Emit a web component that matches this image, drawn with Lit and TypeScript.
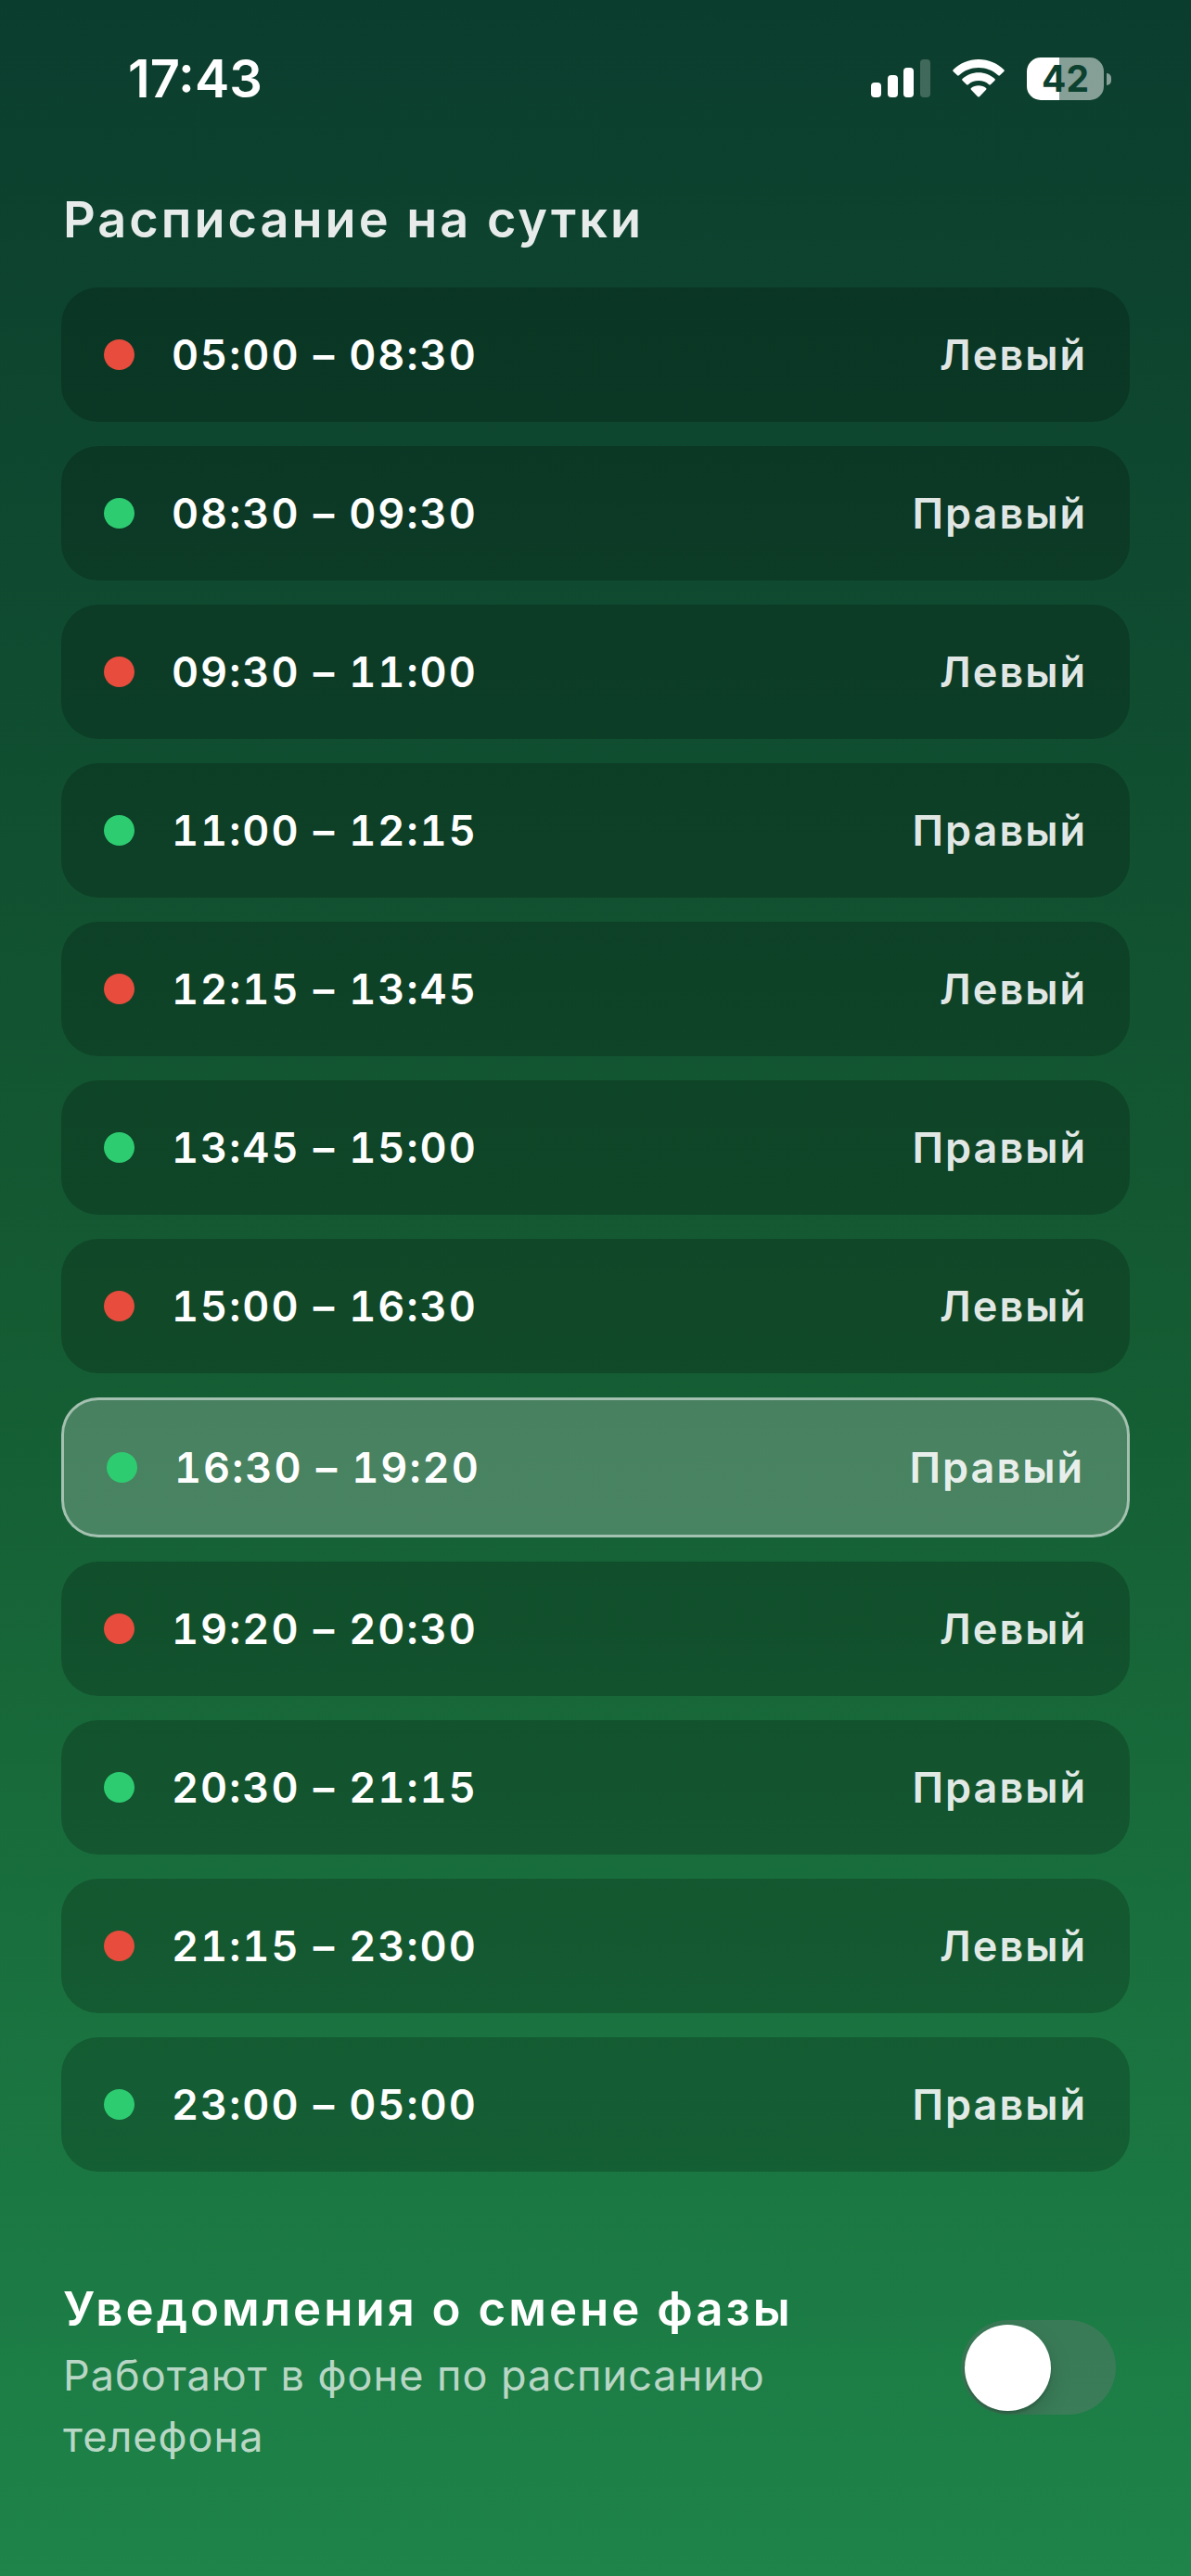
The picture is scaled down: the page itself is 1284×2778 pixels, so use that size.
import { LitElement, html, css, svg } from "lit";
import { customElement, property, state } from "lit/decorators.js";
import { classMap } from "lit/directives/class-map.js";

type Side = "left" | "right";

interface Slot {
  from: string;
  to: string;
  side: Side;
}

const SIDE_NAMES: Record<Side, string> = { left: "Левый", right: "Правый" };

const SLOTS: Slot[] = [
  { from: "05:00", to: "08:30", side: "left" },
  { from: "08:30", to: "09:30", side: "right" },
  { from: "09:30", to: "11:00", side: "left" },
  { from: "11:00", to: "12:15", side: "right" },
  { from: "12:15", to: "13:45", side: "left" },
  { from: "13:45", to: "15:00", side: "right" },
  { from: "15:00", to: "16:30", side: "left" },
  { from: "16:30", to: "19:20", side: "right" },
  { from: "19:20", to: "20:30", side: "left" },
  { from: "20:30", to: "21:15", side: "right" },
  { from: "21:15", to: "23:00", side: "left" },
  { from: "23:00", to: "05:00", side: "right" },
];

const SIGNAL_BARS = [
  { x: 0, h: 16, on: true },
  { x: 18, h: 24, on: true },
  { x: 35, h: 32, on: true },
  { x: 53, h: 41, on: false },
];

@customElement("status-bar")
export class StatusBar extends LitElement {
  @property() time = "";
  @property({ type: Number }) battery = 0;

  static styles = css`
    :host {
      display: flex;
      align-items: center;
      justify-content: space-between;
      padding: 53px 86px 53px 138px;
      color: #fff;
    }
    .time {
      font-size: 56px;
      line-height: 64px;
      font-weight: 600;
    }
    .icons {
      display: flex;
      align-items: center;
    }
    .signal {
      width: 64px;
      height: 42px;
      margin-right: 24px;
    }
    .wifi {
      width: 56px;
      height: 42px;
      margin-right: 24px;
    }
    .battery {
      display: flex;
      align-items: center;
      gap: 3px;
    }
    .cell {
      display: flex;
      align-items: center;
      justify-content: center;
      width: 83px;
      height: 46px;
      border-radius: 15px;
      font-size: 39px;
      line-height: 46px;
      font-weight: 700;
      color: #0c402f;
    }
    .nub {
      width: 5px;
      height: 13px;
      border-radius: 0 6px 6px 0;
      background: rgba(255, 255, 255, 0.5);
    }
  `;

  render() {
    const fill = `background: linear-gradient(to right, #fff ${this.battery}%, rgba(255, 255, 255, 0.5) ${this.battery}%)`;
    return html`
      <span class="time">${this.time}</span>
      <div class="icons">
        <svg class="signal" viewBox="0 0 64 42" aria-hidden="true">
          ${SIGNAL_BARS.map(
            (bar) => svg`<rect x=${bar.x} y=${41 - bar.h} width="11" height=${bar.h} rx="4"
              fill="#fff" fill-opacity=${bar.on ? 1 : 0.22} />`,
          )}
        </svg>
        <svg class="wifi" viewBox="0 0 56 42" aria-hidden="true" fill="#fff">
          <path d="M28 0C17.500 0 7.800 4.200 0.600 11.200Q-0.200 12 0.600 12.900L5.100 17.300Q5.900 18.100 6.800 17.300C12.400 12.200 19.800 9.100 28 9.100S43.600 12.200 49.200 17.300Q50.100 18.100 50.900 17.300L55.400 12.900Q56.200 12 55.400 11.200C48.200 4.200 38.500 0 28 0Z" />
          <path d="M28 14.200C21.300 14.200 15.200 16.800 10.500 21Q9.700 21.800 10.500 22.700L15.100 27.200Q15.900 28 16.800 27.200C19.800 24.600 23.700 23.100 28 23.100S36.200 24.600 39.200 27.200Q40.100 28 40.900 27.200L45.500 22.700Q46.300 21.800 45.500 21C40.800 16.800 34.700 14.200 28 14.200Z" />
          <path d="M28 28.300C24.800 28.300 22.100 29.300 19.900 31.100Q19.100 31.900 19.900 32.700L27.100 40.200Q28 41 28.900 40.200L36.100 32.700Q36.900 31.900 36.100 31.100C33.900 29.300 31.200 28.300 28 28.300Z" />
        </svg>
        <div class="battery">
          <span class="cell" style=${fill}>${this.battery}</span>
          <span class="nub"></span>
        </div>
      </div>
    `;
  }
}

@customElement("schedule-row")
export class ScheduleRow extends LitElement {
  @property({ attribute: false }) slotData!: Slot;
  @property({ type: Boolean, reflect: true }) active = false;

  static styles = css`
    :host {
      display: flex;
      align-items: center;
      padding: 45px 46px;
      border-radius: 40px;
      background: rgba(0, 0, 0, 0.2);
      font-size: 45px;
      line-height: 55px;
      font-weight: 600;
      letter-spacing: 2px;
      color: #fff;
    }
    :host([active]) {
      border: 3px solid rgba(255, 255, 255, 0.5);
      background: rgba(255, 255, 255, 0.22);
    }
    .dot {
      width: 33px;
      height: 33px;
      margin-right: 40px;
      border-radius: 50%;
    }
    .left {
      background: #e74c3c;
    }
    .right {
      background: #2ecc71;
    }
    .range {
      flex: 1;
      font-variant-numeric: tabular-nums;
    }
    .side {
      color: rgba(255, 255, 255, 0.9);
    }
  `;

  render() {
    const { from, to, side } = this.slotData;
    return html`
      <span class=${classMap({ dot: true, [side]: true })}></span>
      <span class="range">${from} – ${to}</span>
      <span class="side">${SIDE_NAMES[side]}</span>
    `;
  }
}

@customElement("app-root")
export class AppRoot extends LitElement {
  @state() private notify = false;

  static styles = css`
    :host {
      display: block;
      box-sizing: border-box;
      min-height: 100vh;
      background: linear-gradient(#0b3d2e, #145a32 50%, #1e8449);
      font-family: Inter, "Liberation Sans", sans-serif;
    }
    main {
      padding: 0 66px;
    }
    h1 {
      margin: 34px 2px 0;
      font-size: 54px;
      line-height: 66px;
      font-weight: 600;
      letter-spacing: 3px;
      color: rgba(255, 255, 255, 0.9);
    }
    .list {
      display: flex;
      flex-direction: column;
      gap: 26px;
      margin: 40px 0 0;
      padding: 0;
      list-style: none;
    }
    .setting {
      display: flex;
      align-items: flex-start;
      justify-content: space-between;
      margin: 115px 15px 0 2px;
    }
    .texts {
      flex: 0 1 860px;
    }
    .name {
      display: block;
      font-size: 51px;
      line-height: 66px;
      font-weight: 600;
      letter-spacing: 3px;
      color: #fff;
    }
    .hint {
      margin: 6px 0 0;
      font-size: 45px;
      line-height: 66px;
      letter-spacing: 1px;
      color: rgba(255, 255, 255, 0.7);
    }
    .toggle {
      appearance: none;
      display: flex;
      align-items: center;
      box-sizing: border-box;
      width: 167px;
      height: 102px;
      margin: 45px 0 0;
      padding: 0 4px;
      border-radius: 51px;
      background: rgba(120, 120, 128, 0.32);
      overflow: hidden;
    }
    .toggle::before {
      content: "";
      width: 93px;
      height: 93px;
      border-radius: 50%;
      background: #fff;
      box-shadow: 0 9px 24px rgba(0, 0, 0, 0.15), 0 3px 3px rgba(0, 0, 0, 0.16);
    }
    .toggle:checked {
      justify-content: flex-end;
      background: #34c759;
    }
  `;

  private onToggle(event: Event) {
    this.notify = (event.target as HTMLInputElement).checked;
  }

  render() {
    return html`
      <status-bar time="17:43" battery="42"></status-bar>
      <main>
        <h1>Расписание на сутки</h1>
        <ul class="list">
          ${SLOTS.map(
            (slot) => html`<li>
              <schedule-row .slotData=${slot} ?active=${slot.from === "16:30"}></schedule-row>
            </li>`,
          )}
        </ul>
        <div class="setting">
          <div class="texts">
            <label class="name" for="notify">Уведомления о смене фазы</label>
            <p class="hint" id="hint">Работают в фоне по расписанию телефона</p>
          </div>
          <input
            class="toggle"
            id="notify"
            type="checkbox"
            role="switch"
            aria-describedby="hint"
            .checked=${this.notify}
            @change=${this.onToggle}
          />
        </div>
      </main>
    `;
  }
}
